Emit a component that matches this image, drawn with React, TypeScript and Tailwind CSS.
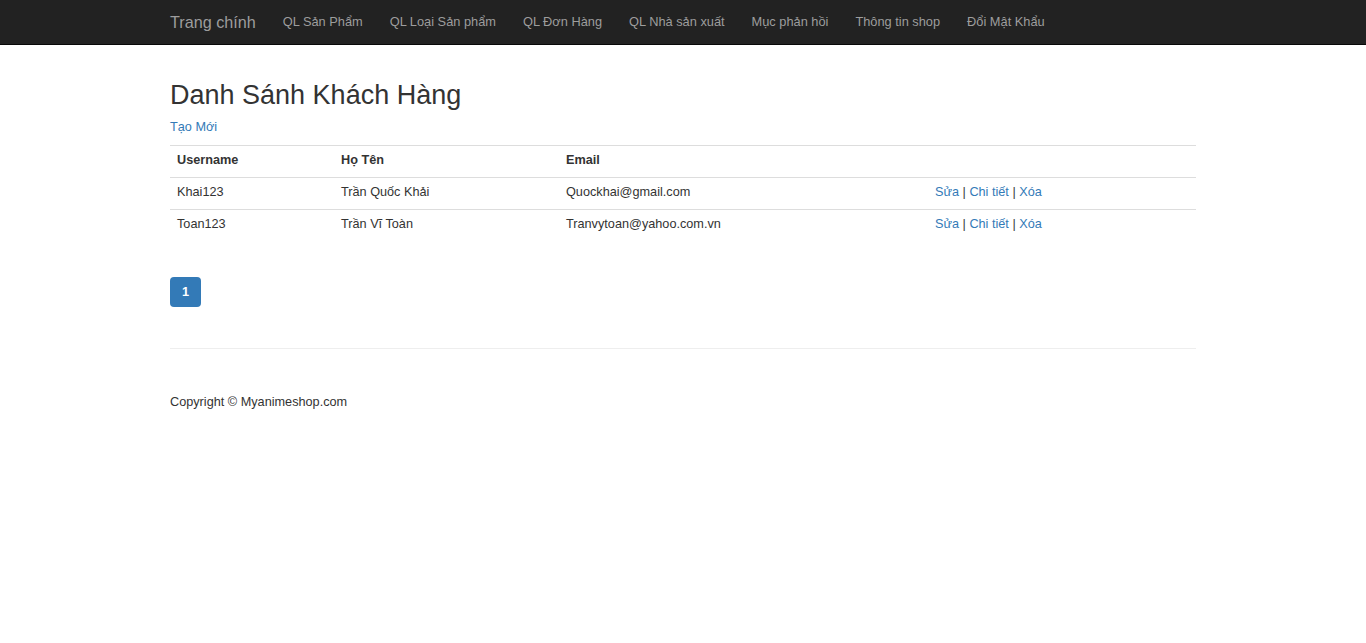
import React from "react";

const navLinks = [
  "QL Sản Phẩm",
  "QL Loại Sản phẩm",
  "QL Đơn Hàng",
  "QL Nhà sản xuất",
  "Mục phản hồi",
  "Thông tin shop",
  "Đổi Mật Khẩu",
];

const rows = [
  { u: "Khai123", n: "Trần Quốc Khải", e: "Quockhai@gmail.com" },
  { u: "Toan123", n: "Trần Vĩ Toàn", e: "Tranvytoan@yahoo.com.vn" },
];

export default function App() {
  return (
    <div
      className="min-h-screen bg-white text-[12.7px] leading-[18px] text-[#333]"
      style={{ fontFamily: '"Liberation Sans", Arial, sans-serif' }}
    >
      <nav className="h-[45px] bg-[#222] border-b border-[#080808]">
        <div className="w-[1026px] mx-auto flex items-center h-[44px]">
          <a className="text-[16.2px] leading-[18px] text-[#9d9d9d] pr-[13.5px]">Trang chính</a>
          {navLinks.map((l) => (
            <a key={l} className="px-[13.5px] text-[12.8px] text-[#9d9d9d] whitespace-nowrap">
              {l}
            </a>
          ))}
        </div>
      </nav>
      <div className="w-[1026px] mx-auto pt-[35px]">
        <h2 className="text-[27px] leading-[30px] font-normal">Danh Sánh Khách Hàng</h2>
        <p className="mt-[8px]">
          <a className="text-[#337ab7]">Tạo Mới</a>
        </p>
        <table className="mt-[9px] w-full border-collapse">
          <colgroup>
            <col style={{ width: 163 }} />
            <col style={{ width: 225 }} />
            <col style={{ width: 369 }} />
            <col style={{ width: 269 }} />
          </colgroup>
          <thead>
            <tr className="border-t border-[#ddd]">
              <th className="text-left align-top font-bold px-[7px] pt-[5px] h-[32px]">Username</th>
              <th className="text-left align-top font-bold px-[8px] pt-[5px] h-[32px]">Họ Tên</th>
              <th className="text-left align-top font-bold px-[8px] pt-[5px] h-[32px]">Email</th>
              <th className="h-[32px]"></th>
            </tr>
          </thead>
          <tbody>
            {rows.map((r) => (
              <tr key={r.u} className="border-t border-[#ddd]">
                <td className="align-top px-[7px] pt-[5px] h-[32px]">{r.u}</td>
                <td className="align-top px-[8px] pt-[5px] h-[32px]">{r.n}</td>
                <td className="align-top px-[8px] pt-[5px] h-[32px]">{r.e}</td>
                <td className="align-top px-[8px] pt-[5px] h-[32px]">
                  <a className="text-[#337ab7]">Sửa</a> | <a className="text-[#337ab7]">Chi tiết</a> |{" "}
                  <a className="text-[#337ab7]">Xóa</a>
                </td>
              </tr>
            ))}
          </tbody>
        </table>
        <div className="mt-[35px] flex">
          <span className="w-[31px] h-[30px] flex items-center justify-center bg-[#337ab7] text-white font-bold rounded-[4px]">
            1
          </span>
        </div>
        <hr className="mt-[41px] border-0 border-t border-[#eee]" />
        <footer className="mt-[44px]">
          <p>Copyright © Myanimeshop.com</p>
        </footer>
      </div>
    </div>
  );
}
